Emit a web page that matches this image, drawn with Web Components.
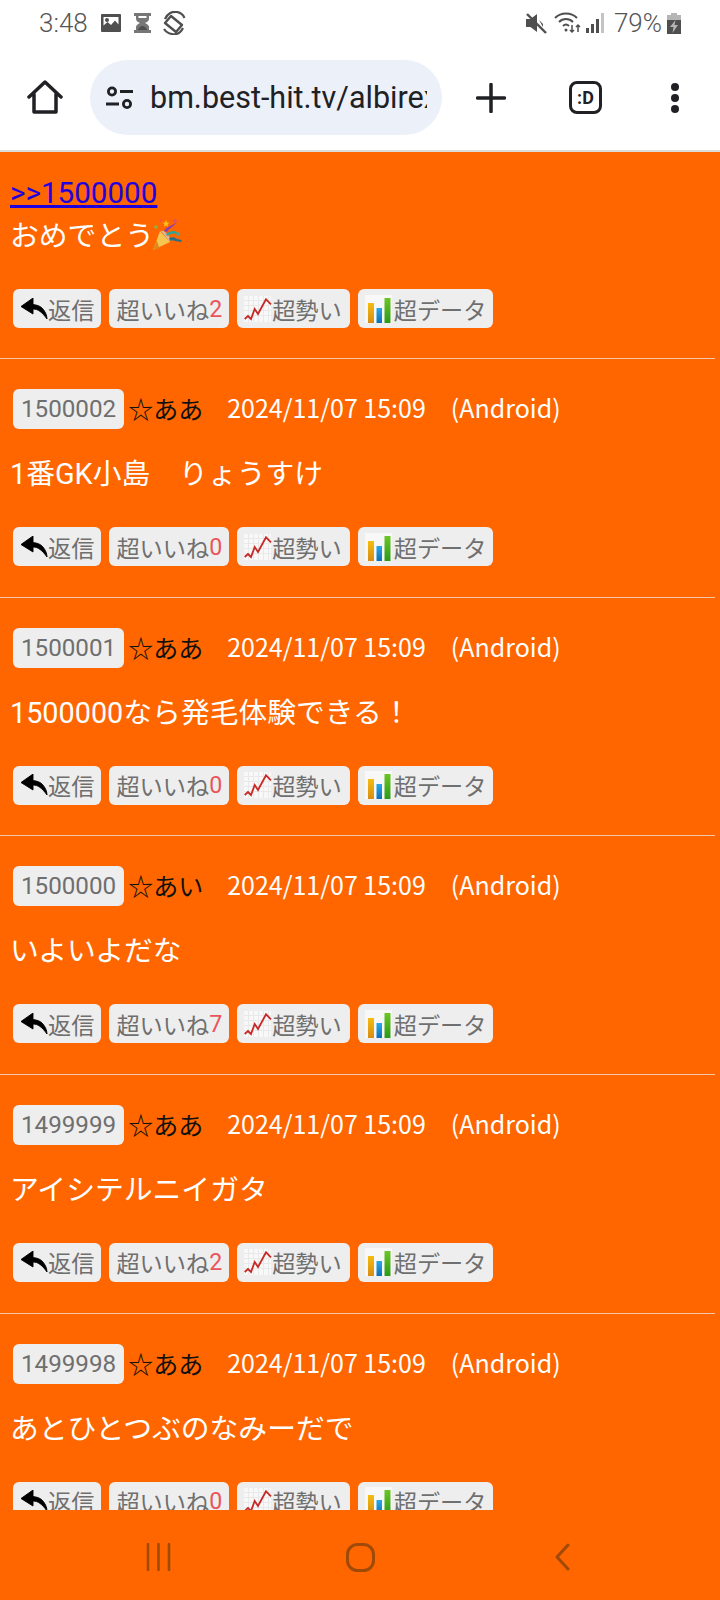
<!DOCTYPE html>
<html lang="ja">
<head>
<meta charset="utf-8">
<title>bm.best-hit.tv</title>
<style>
html, body { margin: 0; padding: 0; background: #ff6600; }
body { font-family: Roboto, "Noto Sans CJK JP", sans-serif; }
</style>
</head>
<body>
<phone-shell>
  <status-bar slot="status"></status-bar>
  <browser-toolbar slot="toolbar" url="bm.best-hit.tv/albirex"></browser-toolbar>

  <bbs-post first likes="2">
    <a slot="quote" href="#">&gt;&gt;1500000</a>
    おめでとう<party-popper></party-popper>
  </bbs-post>
  <bbs-post no="1500002" name="ああ" date="2024/11/07 15:09" likes="0">1番GK小島　りょうすけ</bbs-post>
  <bbs-post no="1500001" name="ああ" date="2024/11/07 15:09" likes="0">1500000なら発毛体験できる！</bbs-post>
  <bbs-post no="1500000" name="あい" date="2024/11/07 15:09" likes="7">いよいよだな</bbs-post>
  <bbs-post no="1499999" name="ああ" date="2024/11/07 15:09" likes="2">アイシテルニイガタ</bbs-post>
  <bbs-post no="1499998" name="ああ" date="2024/11/07 15:09" likes="0">あとひとつぶのなみーだで</bbs-post>

  <nav-bar slot="nav"></nav-bar>
</phone-shell>

<script>
class PhoneShell extends HTMLElement {
    constructor() {
        super()
        const shadow = this.attachShadow({ mode: 'open' })
        shadow.innerHTML = `
        <style>
        :host { display:flex; flex-direction:column; width:720px; height:1600px; overflow:hidden; background:#ff6600; }
        main { flex:1; min-height:0; overflow:hidden; }
        </style>
        <slot name="status"></slot>
        <slot name="toolbar"></slot>
        <main><slot></slot></main>
        <slot name="nav"></slot>
        `
    }
}

class StatusBar extends HTMLElement {
    constructor() {
        super()
        const shadow = this.attachShadow({ mode: 'open' })
        shadow.innerHTML = `
        <style>
        :host { display:flex; align-items:center; height:50px; box-sizing:border-box; padding:0 39px 4px 39px; background:#fff; color:#555; font:300 26px Roboto, sans-serif; }
        .left, .right { display:flex; align-items:center; }
        .right { margin-left:auto; }
        svg { display:block; flex:none; fill:#4f4f4f; }
        </style>
        <div class="left">
            <span>3:48</span>
            <svg width="20" height="18" viewBox="0 0 20 18" style="margin-left:13px"><path fill-rule="evenodd" d="M1 0h18a1 1 0 0 1 1 1v16a1 1 0 0 1-1 1H1a1 1 0 0 1-1-1V1a1 1 0 0 1 1-1zm1.500 3v8.500l4-3.500 3.500 3 4-4.500 3.500 4V3zM6 4a2 2 0 1 1 0 4 2 2 0 0 1 0-4z"/></svg>
            <svg width="17" height="20" viewBox="0 0 17 20" style="margin-left:13px"><path fill="#777" fill-rule="evenodd" d="M0 0h17v3h-2v3c0 2-2 3-4 4 2 1 4 2 4 4v3h2v3H0v-3h2v-3c0-2 2-3 4-4-2-1-4-2-4-4V3H0zm4.500 3v2h8V3z"/><path d="M4 17c0-2 3-4 4.500-4s4.500 2 4.500 4z"/></svg>
            <svg width="24" height="24" viewBox="0 0 24 24" style="margin-left:11px;fill:none;stroke:#4f4f4f"><path d="M9 5l11 9-6 7-11-9z" stroke-width="2.400" stroke-linejoin="round"/><path d="M3 8C5 3 10 0 15 1c3 .5 6 2.500 7.500 6M21 17c-2 4-6 7-11 6-3-.5-6-2-8-5" stroke-width="2.200"/></svg>
        </div>
        <div class="right">
            <svg width="21" height="21" viewBox="0 0 21 21"><path d="M0 6h4.500L11 1v18l-6.500-5H0zM13 7l4 4v3z"/><path d="M1 1l19 19" stroke="#4f4f4f" stroke-width="2.400"/></svg>
            <svg width="27" height="22" viewBox="0 0 27 22" style="margin-left:7px;fill:none;stroke:#4f4f4f;stroke-width:2"><path d="M1 6c6-6 16-6 22 0M5 10c4-4 10-4 14 0M9 14c2-2 4-2 6 0"/><circle cx="12" cy="18" r="1.500" fill="#4f4f4f" stroke="none"/><path d="M18 13v7M16 18l2 2 2-2M24 20v-7M22 15l2-2 2 2" stroke-width="1.500"/></svg>
            <svg width="18" height="20" viewBox="0 0 18 20" style="margin-left:5px"><rect x="0" y="15" width="3" height="5"/><rect x="5" y="11" width="3" height="9"/><rect x="10" y="6" width="3" height="14"/><rect x="15" y="0" width="3" height="20" fill="#c4c4c4"/></svg>
            <span style="margin-left:10px">79%</span>
            <svg width="14" height="21" viewBox="0 0 14 21" style="margin-left:5px"><path d="M4 0h6v2h4v19H0V2h4z" fill="#b5b5b5"/><path fill-rule="evenodd" fill="#4f4f4f" d="M0 7h14v14H0zM8.500 7L3 14h3.500L5.500 20 11 12H7.500z"/></svg>
        </div>
        `
    }
}

class BrowserToolbar extends HTMLElement {
    constructor() {
        super()
        const shadow = this.attachShadow({ mode: 'open' })
        shadow.innerHTML = `
        <style>
        :host { display:flex; align-items:center; height:102px; box-sizing:border-box; padding:0 0 5px 27px; background:#fff; border-bottom:2px solid #dedcd9; }
        svg { display:block; flex:none; }
        .pill { display:flex; align-items:center; width:352px; height:75px; box-sizing:border-box; margin-left:27px; padding:0 15px 0 16px; border-radius:38px; background:#ecf0f9; }
        .url { flex:1; min-width:0; margin-left:16px; overflow:hidden; white-space:nowrap; color:#202124; font:400 30.500px Roboto, sans-serif; }
        .tabs { display:flex; align-items:center; justify-content:center; flex:none; width:33px; height:33px; box-sizing:border-box; margin-left:63px; border:3.500px solid #202124; border-radius:8px; color:#202124; font:700 18px Roboto, sans-serif; }
        </style>
        <svg width="36" height="36" viewBox="0 0 36 36" fill="none" stroke="#202124" stroke-width="3.500" stroke-linejoin="round" stroke-linecap="round"><path d="M2 17L18 2l16 15M7 14v18h22V14"/></svg>
        <div class="pill">
            <svg width="28" height="24" viewBox="0 0 28 24" fill="none" stroke="#202124" stroke-width="2.800"><circle cx="6" cy="5.500" r="3.600"/><path d="M14 5.500h13M0 18h13"/><circle cx="21" cy="18" r="3.600"/></svg>
            <div class="url">${this.getAttribute('url')}</div>
        </div>
        <svg width="30" height="30" viewBox="0 0 30 30" style="margin-left:34px" stroke="#202124" stroke-width="3.500" stroke-linecap="round"><path d="M15 1.500v27M1.500 15h27"/></svg>
        <div class="tabs">:D</div>
        <svg width="12" height="32" viewBox="0 0 12 32" style="margin-left:67px" fill="#202124"><circle cx="6" cy="5" r="4"/><circle cx="6" cy="16" r="4"/><circle cx="6" cy="27" r="4"/></svg>
        `
    }
}

class PartyPopper extends HTMLElement {
    constructor() {
        super()
        const shadow = this.attachShadow({ mode: 'open' })
        shadow.innerHTML = `
        <style>
        :host { display:inline-block; width:32px; height:32px; margin-left:-2px; vertical-align:-5px; }
        svg { display:block; }
        </style>
        <svg width="32" height="32" viewBox="0 0 32 32">
            <path d="M1 31l7-19 10 11z" fill="#f5c451"/>
            <path d="M1 31l3.500-10 3 8z" fill="#e08a1e"/>
            <path d="M9 12l9 11c1-3-1-6-3-8s-4-4-6-3z" fill="#d9b8a0"/>
            <path d="M12 12c3-5 8-5 13-9l1-3c-1 6-8 8-11 13z" fill="#8a3fb0"/>
            <path d="M14 15c4-3 8-4 11-2l-1 2c-3-1-6 0-9 2z" fill="#27a7a0"/>
            <path d="M17 19c3-1 6-1 8 1l5 1-1 2-6-1c-2-1-4-1-5 0z" fill="#2a6f88"/>
            <path d="M14 1l1 2.500 2.500.2-2 1.600.7 2.500-2.200-1.400-2.200 1.400.7-2.500-2-1.600 2.500-.2z" fill="#f6c21c"/>
            <circle cx="23" cy="2" r="1.800" fill="#e0506e"/><circle cx="4" cy="8" r="1.800" fill="#8db33a"/>
            <circle cx="26" cy="15" r="1.800" fill="#3ca99b"/><circle cx="9" cy="1.500" r="1" fill="#e0506e"/>
        </svg>
        `
    }
}

const ICONS = {
    reply: `<svg width="28" height="22" viewBox="0 0 28 22" style="filter:blur(.4px)"><path d="M13 0L1 8.500 13 16v-5c5 0 9 3 14 10 0-4-2-8-5-11-2-2-5-3-9-3.500z" fill="#000" stroke="#000" stroke-width=".9" stroke-linejoin="round"/></svg>`,
    trend: `<svg width="28" height="26" viewBox="0 0 28 26"><rect width="27" height="26" fill="#f8f8f8"/><path d="M0 4.500h27M0 9.500h27M0 14.500h27M0 19.500h27M4.500 0v26M9.500 0v26M14.500 0v26M19.500 0v26M24.500 0v26" stroke="#e9e9e9"/><path d="M.7 23L4 20l3 3 3.700-10L14 18l8-14.700 5 5" fill="none" stroke="#c52a27" stroke-width="1.800"/></svg>`,
    bars: `<svg width="29" height="28" viewBox="0 0 29 28"><defs><linearGradient id="o" x1="0" y1="0" x2="0" y2="1"><stop offset="0" stop-color="#f4bd10"/><stop offset="1" stop-color="#d88c14"/></linearGradient><linearGradient id="b" x1="0" y1="0" x2="0" y2="1"><stop offset="0" stop-color="#28a8ec"/><stop offset="1" stop-color="#0e6fb5"/></linearGradient><linearGradient id="g" x1="0" y1="0" x2="0" y2="1"><stop offset="0" stop-color="#6cc626"/><stop offset="1" stop-color="#2c9a18"/></linearGradient></defs><rect width="27" height="28" fill="#f8f8f8"/><rect x="3" y="8" width="6" height="20" fill="url(#o)"/><rect x="11.500" y="13" width="5.500" height="15" fill="url(#b)"/><rect x="19.500" y="3" width="6" height="25" fill="url(#g)"/></svg>`
}

class PostAction extends HTMLElement {
    constructor() {
        super()
        const shadow = this.attachShadow({ mode: 'open' })
        shadow.innerHTML = `
        <style>
        :host { display:inline-flex; align-items:center; height:39px; box-sizing:border-box; padding:0 7px; border-radius:6px; background:#eeeeee; color:#6f6f6f; font-size:23.200px; white-space:nowrap; }
        :host([icon=trend]) { padding-right:8px; }
        svg { display:block; flex:none; }
        ::slotted(b) { font-weight:400; color:#e8555c; }
        </style>
        ${ICONS[this.getAttribute('icon')] || ''}<slot></slot>
        `
    }
}

class BbsPost extends HTMLElement {
    constructor() {
        super()
        const shadow = this.attachShadow({ mode: 'open' })
        const first = this.hasAttribute('first')
        const head = first ? `<div class="quote"><slot name="quote"></slot></div>` : `
        <div class="meta">
            <span class="no">${this.getAttribute('no')}</span>
            <span class="name">☆${this.getAttribute('name')}</span>
            <span class="date">${this.getAttribute('date')}</span>
            <span class="os">(Android)</span>
        </div>`
        shadow.innerHTML = `
        <style>
        :host { display:block; box-sizing:border-box; width:715px; height:238.670px; border-bottom:1px solid #f4c7a6; color:#fff; font-size:28.800px; }
        :host([first]) { height:207px; }
        .meta { display:flex; align-items:center; height:40px; padding:30px 0 0 13px; font-family:"Noto Sans CJK JP", sans-serif; font-size:25px; white-space:nowrap; }
        .no { display:flex; align-items:center; height:40px; box-sizing:border-box; padding:0 8px; border-radius:6px; background:#eeeeee; color:#6f6f6f; font-family:Roboto, sans-serif; font-size:24.200px; }
        .name { margin-left:4px; padding-bottom:2px; color:#111; }
        .date { margin-left:24px; padding-bottom:4px; }
        .os { margin-left:25px; padding-bottom:4px; }
        .quote { padding:21px 0 0 10px; height:40px; line-height:40px; font-size:29.600px; }
        .quote ::slotted(a) { color:#1f00dd; text-decoration-thickness:2.500px; }
        .msg { height:40px; margin:25px 0 33px 10px; line-height:40px; white-space:nowrap; }
        :host([first]) .msg { margin:3px 0 33px 10px; }
        .actions { display:flex; gap:8px; padding-left:13px; }
        </style>
        ${head}
        <div class="msg"><slot></slot></div>
        <div class="actions">
            <post-action icon="reply">返信</post-action>
            <post-action>超いいね<b>${this.getAttribute('likes')}</b></post-action>
            <post-action icon="trend">超勢い</post-action>
            <post-action icon="bars">超データ</post-action>
        </div>
        `
    }
}

class NavBar extends HTMLElement {
    constructor() {
        super()
        const shadow = this.attachShadow({ mode: 'open' })
        shadow.innerHTML = `
        <style>
        :host { display:grid; grid-template-columns:repeat(3, 202px); justify-items:center; align-items:center; height:90px; box-sizing:border-box; padding:4px 0 0 57px; background:#ff6600; }
        svg { display:block; }
        </style>
        <svg width="25" height="28" viewBox="0 0 25 28" stroke="#a04a08" stroke-width="2.600" stroke-linecap="round"><path d="M2 1v26M12.500 1v26M23 1v26"/></svg>
        <svg width="29" height="29" viewBox="0 0 29 29" fill="none" stroke="#a04a08" stroke-width="3"><rect x="1.500" y="1.500" width="26" height="26" rx="10"/></svg>
        <svg width="16" height="28" viewBox="0 0 16 28" fill="none" stroke="#a04a08" stroke-width="3" stroke-linecap="round" stroke-linejoin="round"><path d="M14 2L3 14l11 12"/></svg>
        `
    }
}

customElements.define('phone-shell', PhoneShell)
customElements.define('status-bar', StatusBar)
customElements.define('browser-toolbar', BrowserToolbar)
customElements.define('party-popper', PartyPopper)
customElements.define('post-action', PostAction)
customElements.define('bbs-post', BbsPost)
customElements.define('nav-bar', NavBar)
</script>
</body>
</html>
